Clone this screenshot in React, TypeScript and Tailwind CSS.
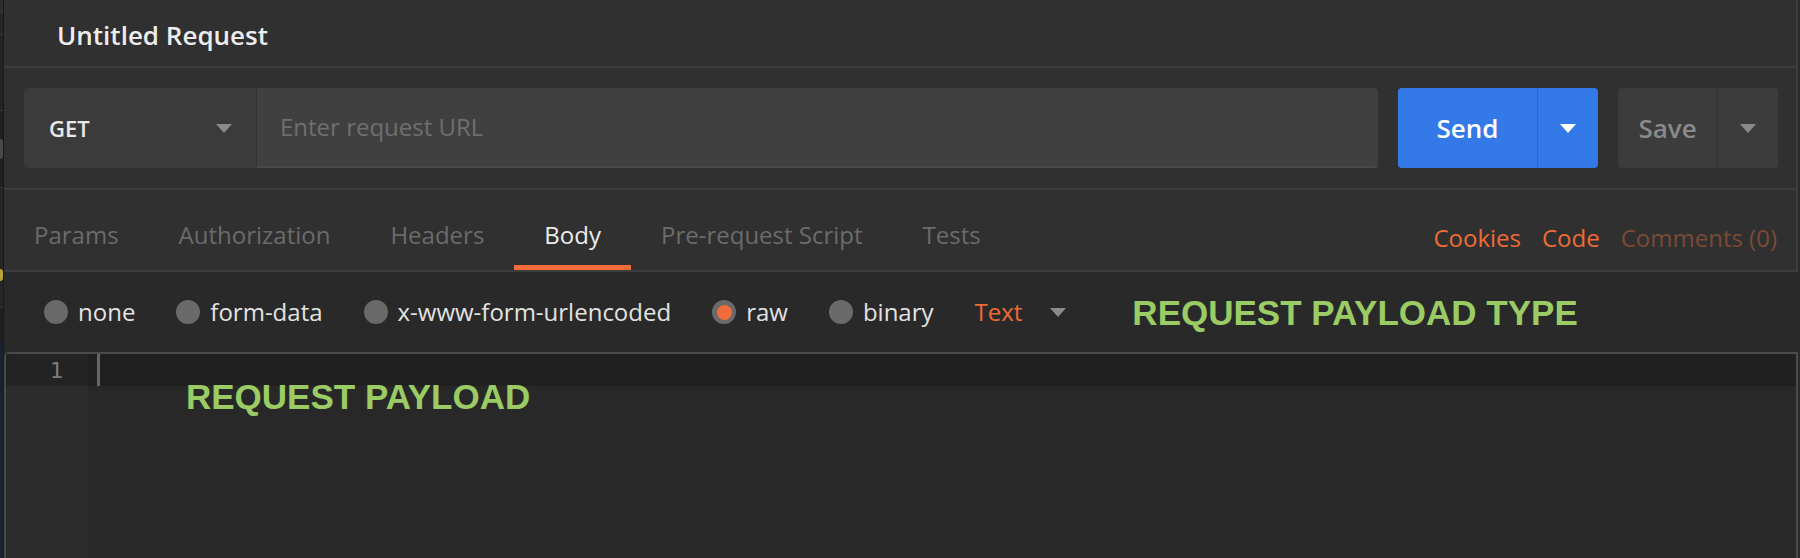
import React from "react";

function Caret({ className }: { className: string }) {
  return (
    <svg width="16" height="9" viewBox="0 0 16 9" className={className}>
      <polygon points="0,0 16,0 8,9" fill="currentColor" />
    </svg>
  );
}

function Radio({ label, selected = false }: { label: string; selected?: boolean }) {
  return (
    <div className="mr-[41px] flex items-center gap-[10px]">
      <div className="flex h-[24px] w-[24px] items-center justify-center rounded-full bg-[#6a6a6a]">
        {selected && <div className="h-[15px] w-[15px] rounded-full bg-[#f26b3a]" />}
      </div>
      <span className="text-[24px] text-[#e2e2e2]">{label}</span>
    </div>
  );
}

export default function App() {
  const tabs = ["Params", "Authorization", "Headers", "Body", "Pre-request Script", "Tests"];

  return (
    <div className="flex h-[558px] w-[1800px] overflow-hidden bg-[#303030] font-['Open_Sans','Noto_Sans',sans-serif]">
      {/* sidebar edge */}
      <div className="flex w-[4px] flex-col border-r border-[#1a1a1a]">
        <div className="h-[12px] bg-[#2d2d2d]" />
        <div className="h-[22px] border-t border-[#363636] bg-[#262626]" />
        <div className="h-[76px] border-t border-[#363636] bg-[#232323]" />
        <div className="flex h-[77px] flex-col justify-center border-t border-[#363636] bg-[#202020]">
          <div className="h-[20px] rounded-r-full bg-[#4a4a4a]" />
        </div>
        <div className="flex h-[120px] flex-col justify-end border-t border-[#363636] bg-[#262626] pb-[26px]">
          <div className="h-[12px] rounded-r-full bg-[#b8a23a]" />
        </div>
        <div className="h-[34px] border-t border-[#363636] bg-[#1f1f1f]" />
        <div className="flex-1 bg-[#1b2130]" />
      </div>

      <div className="flex flex-1 flex-col">
        {/* title */}
        <div className="flex h-[68px] items-center border-b-2 border-r-2 border-[#3d3d3d] pl-[53px] pt-[5px]">
          <span className="text-[26px] font-semibold text-[#ececec]">Untitled Request</span>
        </div>

        {/* url bar */}
        <div className="flex h-[122px] items-center border-b-2 border-r-2 border-[#3d3d3d] pl-[20px] pr-[18px]">
          <div className="flex h-[80px] w-[232px] items-center justify-between rounded-l-[4px] bg-[#3b3b3b] pl-[25px] pr-[24px]">
            <span className="text-[22px] font-semibold text-[#e8e8e8]">GET</span>
            <Caret className="text-[#8a8a8a]" />
          </div>
          <div className="flex h-[80px] flex-1 items-center rounded-r-[4px] border-b-2 border-l border-b-[#4a4a4a] border-l-[#353535] bg-[#404040] pl-[23px]">
            <span className="text-[24px] text-[#6f6f6f]">Enter request URL</span>
          </div>
          <div className="ml-[20px] flex h-[80px] w-[200px] rounded-[4px] bg-[#3479e8]">
            <div className="flex w-[139px] items-center justify-center">
              <span className="text-[26px] font-semibold text-white">Send</span>
            </div>
            <div className="flex flex-1 items-center justify-center border-l border-[#2c6ad2]">
              <Caret className="text-white" />
            </div>
          </div>
          <div className="ml-[20px] flex h-[80px] w-[160px] rounded-[4px] bg-[#3c3c3c]">
            <div className="flex w-[99px] items-center justify-center">
              <span className="text-[26px] font-semibold text-[#8a8a8a]">Save</span>
            </div>
            <div className="flex flex-1 items-center justify-center border-l border-[#333333]">
              <Caret className="text-[#8a8a8a]" />
            </div>
          </div>
        </div>

        {/* tabs */}
        <div className="flex h-[82px] items-stretch justify-between border-b-2 border-r-2 border-[#3d3d3d] pr-[19px]">
          <div className="flex">
            {tabs.map((t) => (
              <div
                key={t}
                className={`flex items-center border-b-[5px] px-[30px] pt-[15px] text-[24px] ${
                  t === "Body" ? "border-[#f26b3a] text-[#ececec]" : "border-transparent text-[#6b6b6b]"
                }`}
              >
                {t}
              </div>
            ))}
          </div>
          <div className="flex items-center gap-[21px] pt-[15px] text-[24px]">
            <span className="text-[#f06a35]">Cookies</span>
            <span className="text-[#f06a35]">Code</span>
            <span className="text-[#7a4a36]">Comments (0)</span>
          </div>
        </div>

        {/* body type */}
        <div className="flex h-[80px] items-center bg-[#292929] pl-[40px]">
          <Radio label="none" />
          <Radio label="form-data" />
          <Radio label="x-www-form-urlencoded" />
          <Radio label="raw" selected />
          <Radio label="binary" />
          <span className="text-[24px] text-[#f06a35]">Text</span>
          <Caret className="ml-[28px] text-[#8a8a8a]" />
          <span className="ml-[66px] font-['Liberation_Sans',Arial,sans-serif] text-[35px] font-bold leading-none text-[#9bcb64]">
            REQUEST PAYLOAD TYPE
          </span>
        </div>

        {/* editor */}
        <div className="relative flex flex-1 rounded-tl-[6px] border-l-2 border-r-2 border-t-2 border-[#4b4b4b]">
          <div className="flex w-[82px] flex-col bg-[#2c2c2c]">
            <div className="flex h-[32px] items-center justify-end bg-[#232323] pr-[25px] font-['DejaVu_Sans_Mono',monospace] text-[22px] text-[#7c7c7c]">
              1
            </div>
          </div>
          <div className="flex flex-1 flex-col bg-[#282828]">
            <div className="flex h-[32px] bg-[#202020] pl-[9px]">
              <div className="h-full w-[3px] bg-[#666666]" />
            </div>
          </div>
          <span className="absolute left-[180px] top-[25px] font-['Liberation_Sans',Arial,sans-serif] text-[35px] font-bold leading-none text-[#9bcb64]">
            REQUEST PAYLOAD
          </span>
        </div>
      </div>

      <div className="w-[2px] bg-[#2a2a2a]" />
    </div>
  );
}
